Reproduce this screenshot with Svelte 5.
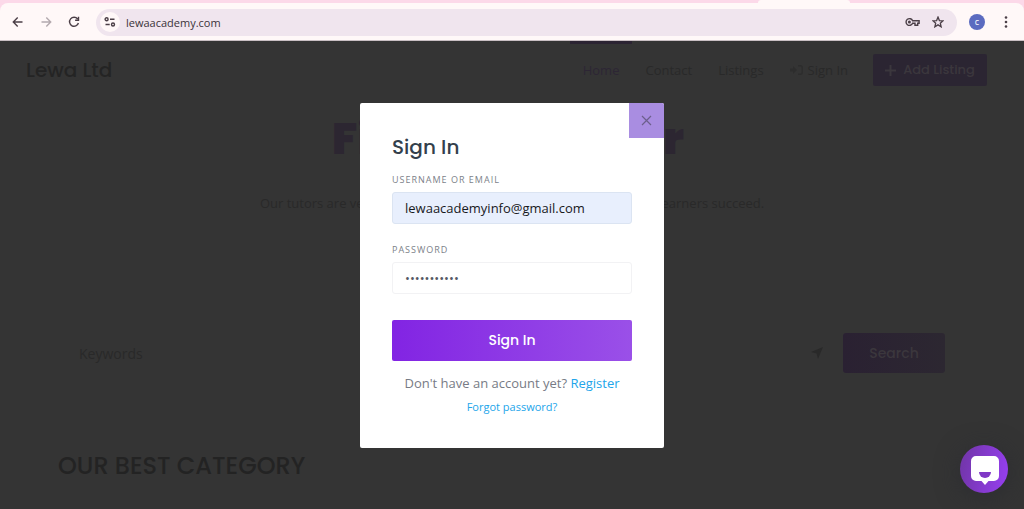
<script>
  let keywords = $state('');
  let email = $state('lewaacademyinfo@gmail.com');
  let password = $state('academy2024');
</script>

<div class="window">
  <div class="tabs"><span class="tab"></span></div>
  <div class="toolbar">
    <button class="tool" aria-label="Back">
      <svg width="12" height="12" viewBox="0 0 12 12"><path d="M10.5 6H1.5M5.7 1.6 1.3 6l4.4 4.4" /></svg>
    </button>
    <button class="tool faded" aria-label="Forward">
      <svg width="12" height="12" viewBox="0 0 12 12"><path d="M1.5 6h9M6.3 1.6 10.7 6l-4.4 4.4" /></svg>
    </button>
    <button class="tool" aria-label="Reload">
      <svg width="12" height="12" viewBox="0 0 12 12"><path d="M9.6 3A4.5 4.5 0 1 0 10.4 7M10.5 .8v3.4H7.1" /></svg>
    </button>
    <div class="address">
      <button class="site" aria-label="Site settings">
        <svg width="12" height="10" viewBox="0 0 12 10"><circle cx="2.6" cy="2.3" r="1.5" /><path d="M6 2.3h4.5M1.5 7.5h4.2" /><circle cx="9" cy="7.5" r="1.5" /></svg>
      </button>
      <span class="url">lewaacademy.com</span>
      <button class="tool" aria-label="Passwords">
        <svg width="15" height="10" viewBox="0 0 15 10"><path d="M7.600 3.700A3.400 3.400 0 1 0 7.600 6.300H10v1.900h2.700V6.300h1.400V3.700Z" /><circle class="solid" cx="4.400" cy="5" r="1.500" /></svg>
      </button>
      <button class="tool" aria-label="Bookmark">
        <svg width="12" height="12" viewBox="0 0 13 13"><path d="m6.5 1.2 1.5 3.7 4 .3-3 2.6.9 3.9-3.4-2.1-3.4 2.1L4 7.8 1 5.2l4-.3Z" /></svg>
      </button>
    </div>
    <button class="avatar" aria-label="Profile">c</button>
    <button class="tool" aria-label="Menu">
      <svg width="4" height="12" viewBox="0 0 4 12"><circle class="solid" cx="2" cy="1.5" r="1.3" /><circle class="solid" cx="2" cy="6" r="1.3" /><circle class="solid" cx="2" cy="10.5" r="1.3" /></svg>
    </button>
  </div>

  <div class="page">
    <header>
      <a class="brand" href="#home">Lewa Ltd</a>
      <nav>
        <a class="active" href="#home">Home</a>
        <a href="#contact">Contact</a>
        <a href="#listings">Listings</a>
        <a class="login" href="#signin">
          <svg width="13" height="10" viewBox="0 0 13 10"><path d="M0 3.500h3V1l4 4-4 4V6.500H0ZM8 0h2.500A2.500 2.500 0 0 1 13 2.500v5A2.500 2.500 0 0 1 10.500 10H8V8.500h2.500a1 1 0 0 0 1-1v-5a1 1 0 0 0-1-1H8Z" /></svg>
          Sign In
        </a>
      </nav>
      <button class="add">
        <svg width="11" height="11" viewBox="0 0 11 11"><path d="M5.500 0v11M0 5.500h11" /></svg>
        Add Listing
      </button>
    </header>

    <section class="hero">
      <h1>Find Your Tutor</h1>
      <p>Our tutors are verified, experienced and always ready to help our learners succeed.</p>
    </section>

    <form class="search">
      <input type="text" aria-label="Keywords" placeholder="Keywords" bind:value={keywords} />
      <svg width="12" height="12" viewBox="0 0 12 12"><path d="M12 0 7 12 5.500 6.500 0 5Z" /></svg>
      <button type="button">Search</button>
    </form>

    <h2>OUR BEST CATEGORY</h2>

    <div class="overlay">
      <div class="dialog" role="dialog" aria-modal="true" aria-labelledby="dialog-title">
        <button class="close" aria-label="Close">
          <svg width="11" height="11" viewBox="0 0 11 11"><path d="m1 1 9 9M10 1l-9 9" /></svg>
        </button>
        <form>
          <h3 id="dialog-title">Sign In</h3>
          <label for="email">Username or Email</label>
          <input class="filled" id="email" type="text" bind:value={email} />
          <label for="password">Password</label>
          <input id="password" type="password" bind:value={password} />
          <button class="submit" type="button">Sign In</button>
          <p>Don't have an account yet? <a href="#register">Register</a></p>
          <a class="forgot" href="#forgot">Forgot password?</a>
        </form>
      </div>
    </div>

    <button class="chat" aria-label="Open chat">
      <svg width="28" height="30" viewBox="0 0 28 30"><path d="M5 0h18a5 5 0 0 1 5 5v15a5 5 0 0 1-5 5h-5.500L14 29l-3.500-4H5a5 5 0 0 1-5-5V5a5 5 0 0 1 5-5Z" fill="#fff" /><path d="M8 16h12a6 6 0 0 1-12 0Z" fill="#8038c6" /></svg>
    </button>
  </div>
</div>

<style>
  :global(body) { margin: 0; }
  * { box-sizing: border-box; }
  button { border: 0; padding: 0; background: none; font: inherit; color: inherit; }
  a { color: inherit; text-decoration: none; }
  svg { display: block; flex: none; }
  h1, h2, h3, p { margin: 0; }

  .window {
    min-height: 100vh;
    display: flex;
    flex-direction: column;
    font-family: "Open Sans", sans-serif;
    font-size: 13px;
  }

  .tabs { height: 3px; background: #fcd9e9; }
  .tab { display: block; width: 92px; height: 3px; margin-left: 74%; background: #fff8f8; border-radius: 3px 3px 0 0; }

  .toolbar {
    display: flex;
    align-items: center;
    gap: 16px;
    height: 38px;
    padding: 0 16px 0 12px;
    background: linear-gradient(#fcd9e9, #fcd9e9) top / 100% 8px no-repeat;
    position: relative;
    color: #4b3f47;
  }
  .toolbar::before {
    content: "";
    position: absolute;
    inset: 0;
    background: #fff8f8;
    border-bottom: 1px solid #c9bfc3;
    border-radius: 8px 8px 0 0;
  }
  .toolbar > * { position: relative; }
  .tool { color: #4b3f47; }
  .tool svg, .site svg { fill: none; stroke: currentColor; stroke-width: 1.4; }
  .tool .solid { fill: currentColor; stroke: none; }
  .faded { color: #b3a9ae; }
  .address {
    flex: 1;
    display: flex;
    align-items: center;
    gap: 12px;
    height: 27px;
    padding: 0 13px 0 4px;
    margin-right: -4px;
    border-radius: 14px;
    background: #f0e5ee;
  }
  .site { display: grid; place-items: center; width: 20px; height: 20px; border-radius: 50%; background: #fff8f8; color: #4b3f47; }
  .url { flex: 1; margin-left: -6px; font: 11px "Open Sans", sans-serif; color: #3b3339; }
  .avatar { width: 16px; height: 16px; margin-right: 3px; border-radius: 50%; background: #5b6bc0; color: #fff; font-size: 9px; line-height: 16px; }

  .page {
    flex: 1;
    position: relative;
    background: #343434;
    color: #292929;
  }
  header {
    display: flex;
    align-items: center;
    height: 58px;
    padding: 0 37px 0 26px;
  }
  .brand { flex: 1; font: 500 20px Poppins, Inter, sans-serif; color: #242424; }
  nav { display: flex; align-self: stretch; margin-right: 12px; }
  nav a { display: flex; align-items: center; gap: 5px; padding: 0 13px; border-top: 3px solid transparent; border-bottom: 3px solid transparent; }
  nav .active { color: #2d2634; border-top-color: #2b2332; }
  .login svg { fill: #2d2d2d; }
  .add {
    display: flex;
    align-items: center;
    justify-content: center;
    gap: 7px;
    width: 114px;
    height: 32px;
    border-radius: 2px;
    background: #2b2532;
    font: 500 13px Poppins, Inter, sans-serif;
    color: #3b373d;
  }
  .add svg { stroke: currentColor; stroke-width: 2; }

  .hero { padding-top: 12px; text-align: center; }
  h1 { padding-right: 8px; font: 900 44px/56px Poppins, Inter, sans-serif; color: #2c2631; }
  .hero p { margin-top: 26px; line-height: 20px; }

  .search { display: flex; align-items: center; margin: 120px 79px 0; }
  .search input { flex: 1; min-width: 0; padding: 0; border: 0; outline: 0; background: none; font: 14px "Open Sans", sans-serif; }
  .search input::placeholder { color: #292929; opacity: 1; }
  .search svg { fill: #292929; }
  .search button {
    width: 102px;
    height: 40px;
    margin-left: 20px;
    border-radius: 3px;
    background: linear-gradient(90deg, #2a2132, #2c2731);
    font: 500 14px Poppins, Inter, sans-serif;
    color: #3b373d;
  }
  h2 { margin: 77px 58px 25px; font: 500 24px/32px Poppins, Inter, sans-serif; color: #232323; }

  .overlay { position: absolute; inset: 0; display: grid; place-items: center; }
  .dialog { position: relative; width: 304px; padding: 32px; border-radius: 2px; background: #fff; }
  .close {
    position: absolute;
    top: 0;
    right: 0;
    display: grid;
    place-items: center;
    width: 35px;
    height: 35px;
    border-radius: 0 2px 0 0;
    background: #a98de1;
    color: #6c5f8c;
  }
  .close svg { stroke: currentColor; stroke-width: 1.2; }
  .dialog form { display: flex; flex-direction: column; }
  h3 { margin-bottom: 13px; font: 500 20px/24px Poppins, Inter, sans-serif; color: #343f4c; }
  label { margin-bottom: 4px; font-size: 9px; line-height: 16px; letter-spacing: 1px; text-transform: uppercase; color: #7c7f89; }
  .dialog input {
    width: 100%;
    height: 32px;
    margin-bottom: 18px;
    padding: 0 12px;
    border: 1px solid #f2f2f4;
    border-radius: 3px;
    outline: 0;
    background: #fff;
    font: 13px "Open Sans", sans-serif;
    color: #555864;
  }
  .dialog .filled { background: #e8effd; border-color: #dbe4f2; color: #18191c; }
  .dialog #password { margin-bottom: 26px; }
  .submit {
    height: 41px;
    margin-bottom: 12px;
    border-radius: 2px;
    background: linear-gradient(90deg, #8224e3, #9a50e8);
    font: 500 14px Poppins, Inter, sans-serif;
    color: #fff;
  }
  .dialog p { line-height: 20px; text-align: center; color: #777b85; }
  .dialog a { color: #22a5ea; }
  .dialog .forgot { margin-top: 5px; font-size: 11px; line-height: 18px; text-align: center; }

  .chat {
    position: fixed;
    right: 16px;
    bottom: 16px;
    display: grid;
    place-items: center;
    width: 48px;
    height: 48px;
    padding: 4px 0 0 2px;
    border-radius: 50%;
    background: linear-gradient(100deg, #7035a5, #973ff2);
    box-shadow: 0 4px 24px #2c2d31;
  }
</style>
